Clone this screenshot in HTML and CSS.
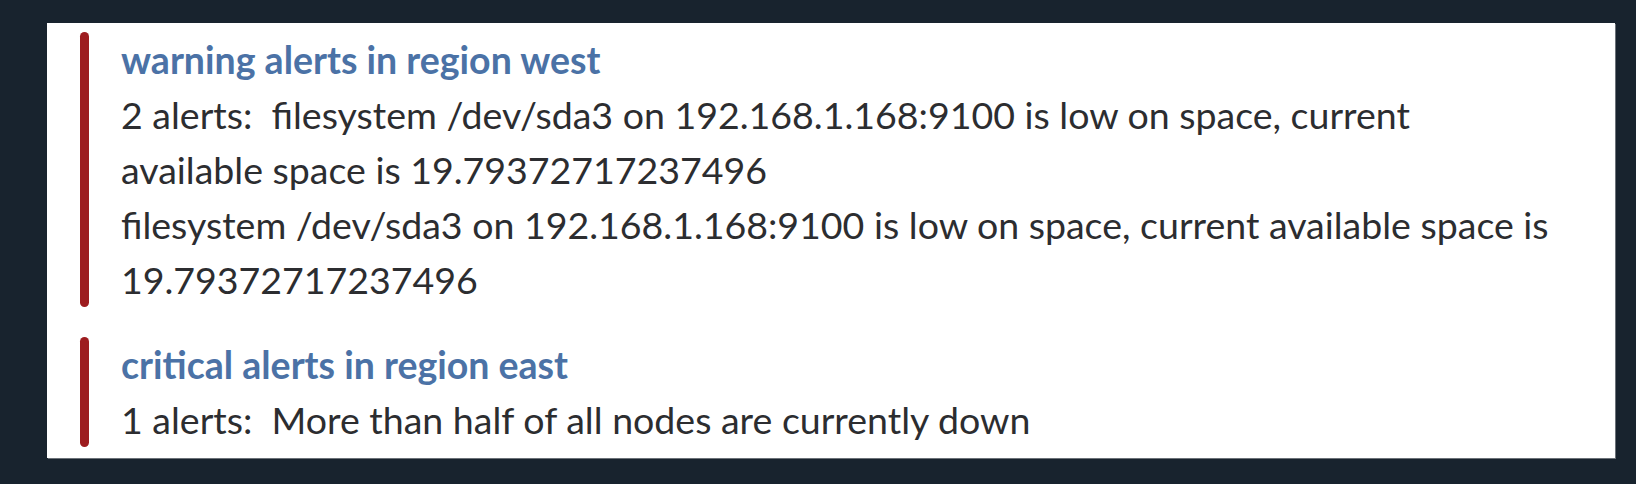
FILE: index.html
```html
<!DOCTYPE html>
<html>
<head>
<meta charset="utf-8">
<link rel="stylesheet" href="styles.css">
</head>
<body>
<div class="page">
  <div class="panel">
    <div class="attachment">
      <div class="bar"></div>
      <div class="content">
        <div class="title">warning alerts in region west</div>
        <div class="text">2 alerts:&nbsp; filesystem /dev/sda3 on 192.168.1.168:9100 is low on space, current available space is 19.79372717237496<br>filesystem /dev/sda3 on 192.168.1.168:9100 is low on space, current available space is 19.79372717237496</div>
      </div>
    </div>
    <div class="attachment">
      <div class="bar"></div>
      <div class="content">
        <div class="title">critical alerts in region east</div>
        <div class="text">1 alerts:&nbsp; More than half of all nodes are currently down</div>
      </div>
    </div>
  </div>
</div>
</body>
</html>
```

FILE: styles.css
```css
html, body {
  margin: 0;
  padding: 0;
  background: #18232e;
}
.page {
  width: 1636px;
  height: 484px;
  padding: 23px 21px 0 47px;
  box-sizing: border-box;
}
.panel {
  background: #ffffff;
  height: 435px;
  box-sizing: border-box;
  padding: 9px 60px 0 33px;
  display: flex;
  flex-direction: column;
  gap: 30px;
  box-shadow: 1px 1px 0 #6b7178;
}
.attachment {
  display: flex;
  gap: 32px;
}
.bar {
  width: 9px;
  flex: none;
  background: #9d1c1f;
  border-radius: 5px;
}
.content {
  flex: 1;
  font-family: Lato, "Liberation Sans", sans-serif;
  font-size: 37.5px;
  line-height: 55px;
  color: #2c2d30;
}
.title {
  font-weight: bold;
  color: #4b72a6;
}
.text {
  color: #2c2d30;
}
```
